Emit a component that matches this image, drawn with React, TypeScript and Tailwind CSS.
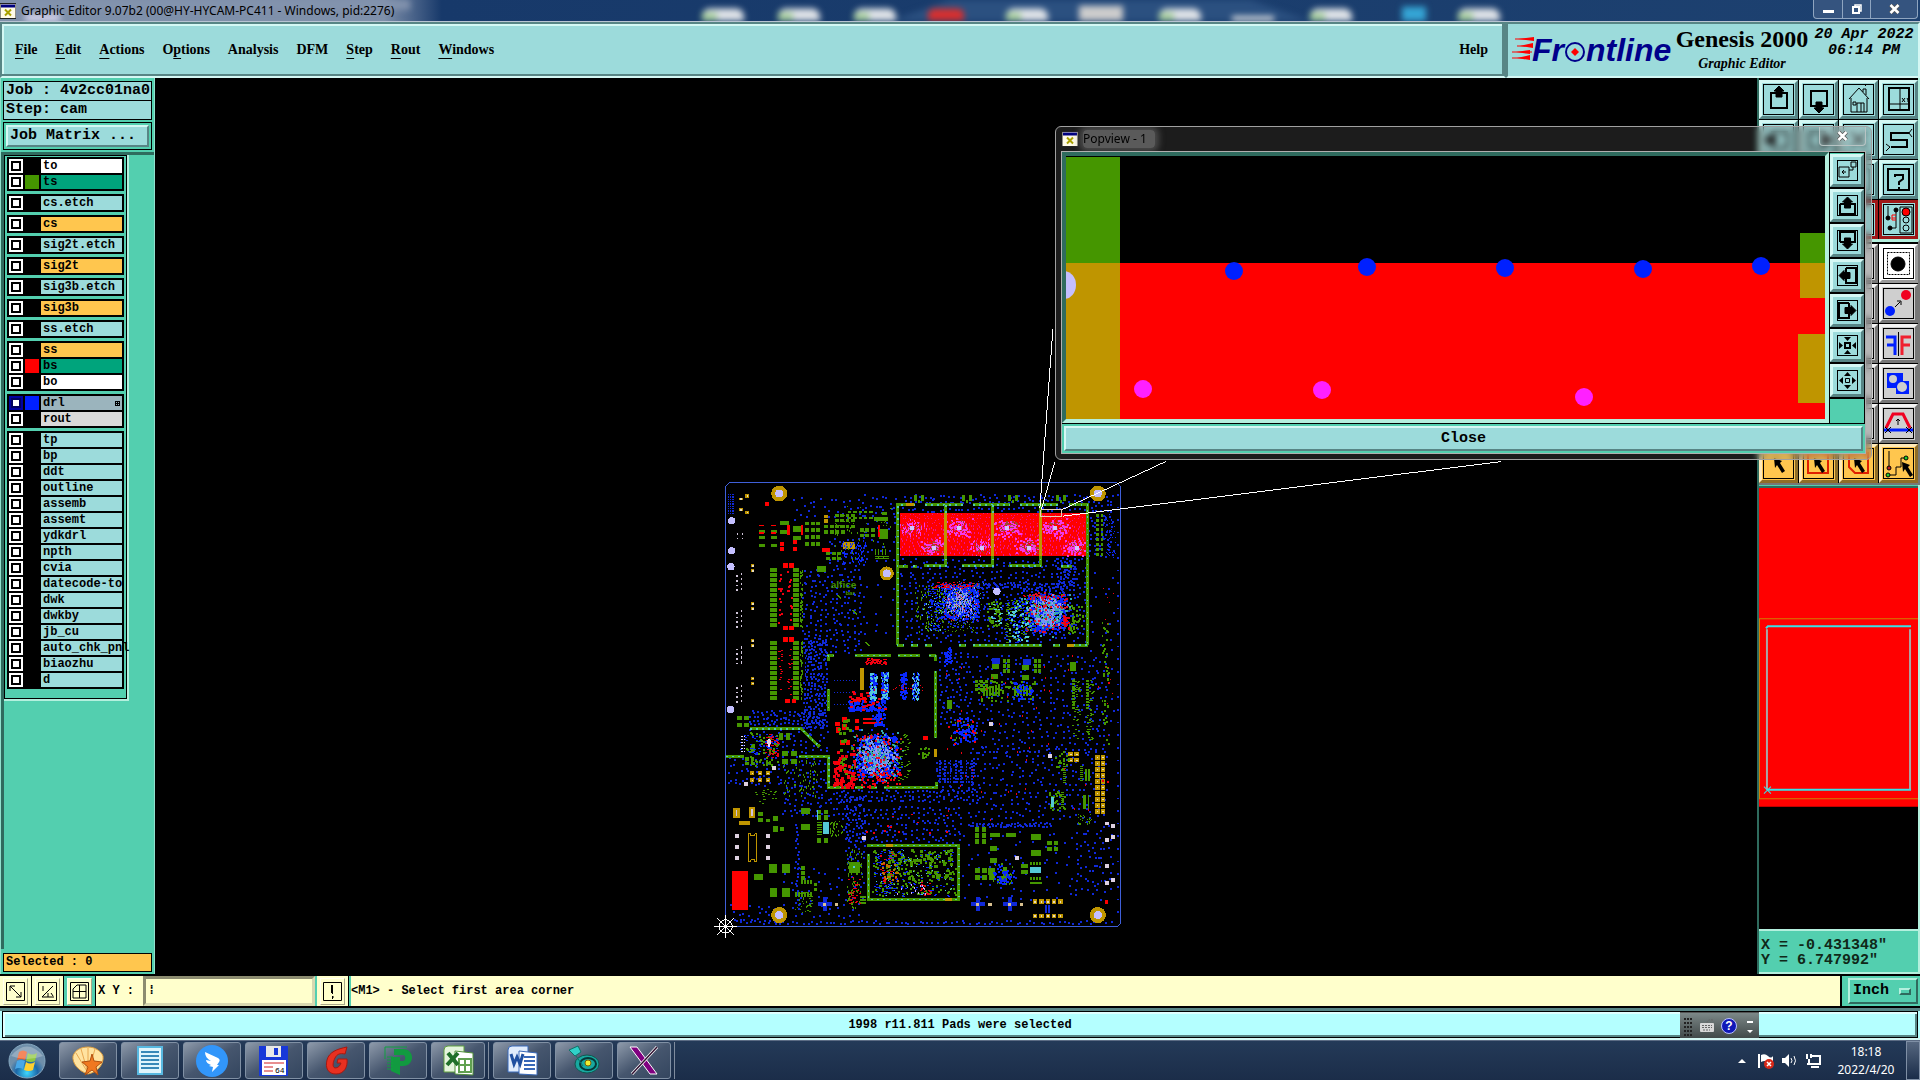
import type { ReactNode } from 'react'

type Box = [number, number, number, number]
type Dot = [number, number]

const MONO = "font-['Liberation_Mono',monospace] font-bold"
const SERIF = "font-['Liberation_Serif',serif] font-bold"
const SANS = "font-['Noto_Sans',sans-serif]"

const AQUA_RAISED = 'border-t-[#d4f8f4] border-l-[#d4f8f4] border-r-[#578585] border-b-[#578585] bg-[#9cdbdb]'

type Layer = { name: string; bg?: string; swatch?: string; active?: boolean }

const AQUA = 'bg-[#9cdbdb]'
const AMBER = 'bg-[#ffc64e]'

const layerGroups: Layer[][] = [
  [{ name: 'to', bg: 'bg-white' }, { name: 'ts', bg: 'bg-[#00a47c]', swatch: 'bg-[#459600]' }],
  [{ name: 'cs.etch' }],
  [{ name: 'cs', bg: AMBER }],
  [{ name: 'sig2t.etch' }],
  [{ name: 'sig2t', bg: AMBER }],
  [{ name: 'sig3b.etch' }],
  [{ name: 'sig3b', bg: AMBER }],
  [{ name: 'ss.etch' }],
  [{ name: 'ss', bg: AMBER }, { name: 'bs', bg: 'bg-[#00a47c]', swatch: 'bg-[#ff0000]' }, { name: 'bo', bg: 'bg-white' }],
  [{ name: 'drl', bg: 'bg-[#9bb4bd]', swatch: 'bg-[#0020ff]', active: true }, { name: 'rout', bg: 'bg-[#d9d9d9]' }],
  ['tp', 'bp', 'ddt', 'outline', 'assemb', 'assemt', 'ydkdrl', 'npth', 'cvia', 'datecode-to', 'dwk', 'dwkby', 'jb_cu', 'auto_chk_pnl', 'biaozhu', 'd'].map((name) => ({ name })),
]

// [text before, underlined letter, text after]
const menus: [string, string, string][] = [
  ['', 'F', 'ile'],
  ['', 'E', 'dit'],
  ['', 'A', 'ctions'],
  ['O', 'p', 'tions'],
  ['Analysis', '', ''],
  ['DFM', '', ''],
  ['', 'S', 'tep'],
  ['', 'R', 'out'],
  ['', 'W', 'indows'],
]

const XWindowIcon = () => (
  <svg viewBox="0 0 16 15" className="h-4 w-4 shrink-0" aria-hidden="true">
    <rect width="16" height="15" fill="#fffbe8" stroke="#222" />
    <rect x="1" y="1" width="14" height="3" fill="#000080" />
    <path d="M5 6l6 6M11 6l-6 6" stroke="#a8a000" strokeWidth="2" />
  </svg>
)

function TitleBar() {
  return (
    <header className="relative flex h-[22px] shrink-0 items-center overflow-hidden border-b border-[#b9c4d2] bg-linear-to-r from-[#7f90aa] from-20% via-[#17396a] via-23% to-[#1d4170]">
      <svg className="absolute inset-0 h-full w-full blur-[3px]" viewBox="0 0 1920 22" preserveAspectRatio="none" aria-hidden="true">
        <path d="M950 0h300l60 22h-420z" fill="#2b5080" />
        {[722, 798, 874, 1026, 1179, 1330, 1478].map((x) => (
          <g key={x}>
            <rect x={x - 20} y="9" width="42" height="20" rx="8" fill="#dfe3e8" />
            <rect x={x - 20} y="13" width="15" height="12" fill="#a9cfa0" />
          </g>
        ))}
        <rect x="928" y="9" width="36" height="16" rx="6" fill="#d63030" />
        <rect x="1079" y="6" width="44" height="20" fill="#cccccc" />
        <rect x="1232" y="17" width="42" height="8" fill="#e8e8e8" />
        <rect x="1402" y="7" width="24" height="18" fill="#35a5d5" />
        <rect x="0" y="0" width="410" height="10" fill="#8393ae" />
        <rect x="25" y="15" width="35" height="8" fill="#e0dcf4" />
      </svg>
      <div className="relative flex items-center gap-[5px]">
        <XWindowIcon />
        <h1 className={`${SANS} text-[12px] leading-5 text-black`}>Graphic Editor 9.07b2 (00@HY-HYCAM-PC411 - Windows, pid:2276)</h1>
      </div>
      <div className="relative mr-[2px] ml-auto flex h-[19px] self-start rounded-b border border-t-0 border-[#8fa5c0] bg-[#35547f]">
        <button aria-label="Minimize" className="flex w-[29px] items-center justify-center border-r border-[#8fa5c0]">
          <span className="mt-1 h-[3px] w-[11px] bg-white" />
        </button>
        <button aria-label="Restore" className="flex w-[28px] items-center justify-center border-r border-[#8fa5c0]">
          <svg viewBox="0 0 10 10" className="h-[10px] w-[10px]" fill="none" stroke="#fff">
            <path d="M3 2V1h6v6H8" strokeWidth="1.5" />
            <path d="M1 3h6v6H1z" strokeWidth="2" />
          </svg>
        </button>
        <button aria-label="Close" className="flex w-[46px] items-center justify-center">
          <CloseGlyph />
        </button>
      </div>
    </header>
  )
}

const CloseGlyph = () => (
  <svg viewBox="0 0 11 10" className="h-[10px] w-[11px]">
    <path d="M1.500 1l8 8M9.500 1l-8 8" stroke="#555" strokeWidth="4" />
    <path d="M1.500 1l8 8M9.500 1l-8 8" stroke="#fff" strokeWidth="2.500" />
  </svg>
)

function FrontlineLogo() {
  return (
    <svg viewBox="0 0 162 40" className="h-10 w-[162px] overflow-visible" role="img" aria-label="Frontline">
      <g fill="#f00" stroke="#f00">
        <path d="M3 8h18M5 15h15M0 21h20M0 27h18" strokeWidth="1" />
        <path d="M6 8l16-2v4zM8 15l13-3v5zM4 21l14-2v4zM5 27l13-3v5z" stroke="none" />
      </g>
      <g fill="#00008b" fontFamily="Liberation Sans" fontWeight="bold" fontStyle="italic" fontSize="32">
        <text x="20" y="30">Fr</text>
        <text x="74" y="30">ntline</text>
      </g>
      <circle cx="63" cy="21" r="9" fill="#9cdbdb" stroke="#00008b" strokeWidth="2" />
      <path d="M63 17l4 4-4 4-4-4z" fill="#f00" />
    </svg>
  )
}

function HeaderBar() {
  return (
    <div className="flex h-14 shrink-0 bg-[#9cdbdb]">
      <nav className="flex flex-1 items-center border-2 border-t-[#578585] border-r-[#578585] border-b-[#d4f8f4] border-l-[#578585] pr-4 pl-[13px] shadow-[inset_-2px_-2px_#578585,inset_2px_2px_#d4f8f4]">
        <ul className={`${SERIF} flex flex-1 gap-[18px] text-[14px] leading-5`}>
          {menus.map(([before, key, after]) => (
            <li key={before + key + after}>
              <button>
                {before}
                <span className="underline underline-offset-4">{key}</span>
                {after}
              </button>
            </li>
          ))}
        </ul>
        <button className={`${SERIF} text-[14px] leading-5`}>Help</button>
      </nav>
      <div className="flex w-[414px] items-start border-2 border-t-[#578585] border-r-[#d4f8f4] border-b-[#d4f8f4] border-l-[#578585] pt-[2px] pl-1">
        <div className="pt-[5px]">
          <FrontlineLogo />
        </div>
        <div className={`${SERIF} w-[136px] text-center`}>
          <p className="text-[24px] leading-[26px] whitespace-nowrap">Genesis 2000</p>
          <p className="text-[14px] leading-6 italic">Graphic Editor</p>
        </div>
        <div className={`${MONO} flex-1 pt-px text-center text-[15px] leading-4 italic`}>
          <p className="whitespace-nowrap">20 Apr 2022</p>
          <p>06:14 PM</p>
        </div>
      </div>
    </div>
  )
}

function LayerRow({ name, bg = AQUA, swatch = 'bg-black', active }: Layer) {
  return (
    <li className="flex h-4 items-center gap-[2px]">
      <label className="flex h-4 items-center gap-[2px]">
        <input
          type="checkbox"
          defaultChecked={active}
          className="h-[14px] w-[14px] shrink-0 appearance-none border-2 border-white bg-white shadow-[inset_0_0_0_2px_#000] checked:border-[#0000a0] checked:shadow-[inset_0_0_0_2px_#000060]"
        />
        <span className={`h-[14px] w-[14px] shrink-0 ${swatch}`} />
        <span className={`${MONO} ${bg} h-[14px] w-[81px] pl-[2px] text-[12px] leading-[14px] whitespace-nowrap`}>{name}</span>
      </label>
      {active && (
        <svg viewBox="0 0 5 5" className="-ml-[9px] h-[5px] w-[5px]" aria-hidden="true" shapeRendering="crispEdges">
          <path d="M.5 .5h4v4h-4zM.5 2.500h4M2.500 .5v4" fill="none" stroke="#000" />
        </svg>
      )}
    </li>
  )
}

function LayerPanel() {
  return (
    <aside className="flex w-[155px] shrink-0 flex-col border-x border-[#8fe0cc] bg-[#53cfaf]">
      <div className={`${MONO} flex flex-col px-[2px] pt-[3px] text-[15px]`}>
        <p className="h-[20px] border border-black bg-[#9cdbdb] pl-[2px] leading-[18px] whitespace-nowrap">Job : 4v2cc01na0</p>
        <p className="-mt-px h-[20px] border border-black bg-[#9cdbdb] pl-[2px] leading-[18px]">Step: cam</p>
        <div className="mt-[2px] border border-black p-[2px]">
          <button className={`${AQUA_RAISED} block h-[22px] w-full border-2 pl-[2px] text-left leading-[18px]`}>Job Matrix ...</button>
        </div>
      </div>
      <div className="mt-[2px] flex flex-1 items-start border-t-3 border-l-3 border-[#2f6b5e]">
        <div className="w-[125px] border-r-2 border-b-2 border-[#b4f0de]">
          <ul className="flex flex-col gap-[3px] border border-black px-[2px] pt-px pb-[9px]">
            {layerGroups.map((group) => (
              <li key={group[0].name} className="bg-black p-px pl-[2px]">
                <ul>
                  {group.map((layer) => (
                    <LayerRow key={layer.name} {...layer} />
                  ))}
                </ul>
              </li>
            ))}
          </ul>
        </div>
      </div>
      <p className={`${MONO} m-[2px] mt-1 h-[19px] border border-black bg-[#ffc64e] pl-[2px] text-[12px] leading-[17px]`}>Selected : 0</p>
    </aside>
  )
}

/* ---------- board artwork ---------- */

const boxPath = (boxes: Box[]) => boxes.map(([x, y, w, h]) => `M${x} ${y}h${w}v${h}h${-w}z`).join('')

const random = (seed: number) => () => {
  seed = (seed * 1664525 + 1013904223) % 4294967296
  return seed / 4294967296
}

// Pads sprinkled over a zone, snapped to the 3-unit raster
const scatter = (seed: number, [x, y, w, h]: Box, count: number, size = 6, tall = size) => {
  const next = random(seed)
  return boxPath(
    Array.from({ length: count }, (): Box => [x + Math.round((next() * w) / 3) * 3, y + Math.round((next() * h) / 3) * 3, size, tall]),
  )
}

// Evenly spread vias: one per cell, with some jitter
const spread = (seed: number, [x, y, w, h]: Box, count: number, size = 6) => {
  const next = random(seed)
  const cell = Math.sqrt((w * h) / count)
  const cols = Math.max(1, Math.round(w / cell))
  const rows = Math.max(1, Math.round(h / cell))
  const snap = (v: number) => Math.round(v / 3) * 3
  return boxPath(
    Array.from({ length: cols * rows }, (_, i): Box => [
      x + snap(((i % cols) + next() * 0.8) * (w / cols)),
      y + snap((Math.floor(i / cols) + next() * 0.8) * (h / rows)),
      size,
      size,
    ]),
  )
}

// Same, but denser towards the centre
const cluster = (seed: number, [x, y, w, h]: Box, count: number, size = 3, tall = size) => {
  const next = random(seed)
  const pick = () => (next() + next()) / 2
  return boxPath(
    Array.from({ length: count }, (): Box => [x + Math.round((pick() * w) / 3) * 3, y + Math.round((pick() * h) / 3) * 3, size, tall]),
  )
}

const grid = (x: number, y: number, cols: number, rows: number, dx: number, dy: number, w: number, h: number): Box[] =>
  Array.from({ length: cols * rows }, (_, i): Box => [x + (i % cols) * dx, y + Math.floor(i / cols) * dy, w, h])

const viaZones: [Box, number][] = [
  [[230, 80, 310, 70], 50],
  [[440, 70, 105, 210], 40],
  [[340, 200, 110, 90], 35],
  [[260, 290, 180, 260], 170],
  [[262, 500, 75, 270], 200],
  [[440, 340, 100, 170], 14],
  [[555, 262, 560, 85], 140],
  [[560, 340, 555, 175], 300],
  [[560, 70, 640, 28], 80],
  [[780, 335, 260, 20], 60],
  [[1020, 260, 60, 100], 60],
  [[555, 108, 560, 14], 40],
  [[1120, 100, 80, 160], 60],
  [[670, 535, 90, 230], 80],
  [[760, 550, 420, 300], 300],
  [[760, 830, 420, 220], 240],
  [[100, 720, 230, 60], 100],
  [[120, 780, 220, 170], 110],
  [[200, 940, 190, 100], 80],
  [[370, 955, 420, 40], 90],
  [[380, 1005, 360, 115], 170],
  [[390, 970, 60, 220], 70],
  [[760, 1055, 250, 14], 45],
  [[740, 1080, 440, 220], 90],
  [[240, 1060, 12, 260], 34],
  [[40, 1300, 150, 60], 26],
  [[60, 1350, 1130, 12], 70],
  [[200, 1190, 250, 160], 60],
  [[660, 870, 120, 100], 60],
  [[1080, 1050, 120, 220], 40],
  [[1125, 300, 80, 500], 36],
  [[35, 860, 100, 90], 30],
]

const greenPads: Box[] = [
  ...grid(165, 292, 1, 12, 0, 15, 21, 13),
  ...grid(234, 292, 1, 12, 0, 15, 18, 13),
  ...grid(165, 511, 1, 12, 0, 15, 21, 13),
  ...grid(234, 511, 1, 12, 0, 15, 18, 13),
  ...grid(130, 180, 2, 2, 36, 18, 18, 8),
  ...grid(130, 222, 2, 1, 36, 0, 18, 7),
  [195, 150, 27, 15], [195, 180, 27, 12], [234, 168, 24, 16], [234, 197, 24, 12], [306, 288, 27, 17],
  ...grid(270, 153, 3, 4, 17, 21, 12, 11),
  ...grid(327, 162, 4, 2, 17, 18, 12, 12),
  ...grid(360, 129, 4, 3, 16, 17, 11, 9),
  ...grid(399, 120, 5, 2, 16, 18, 10, 8),
  ...grid(435, 174, 3, 2, 16, 17, 12, 10),
  ...grid(333, 246, 3, 2, 17, 14, 12, 9),
  [477, 140, 42, 12], [492, 177, 27, 14], [492, 192, 27, 14], [500, 125, 15, 9],
  [480, 237, 3, 18], [490, 237, 3, 18], [500, 237, 3, 18], [510, 237, 3, 18], [480, 258, 42, 3], [480, 264, 42, 3],
  ...[597, 741, 879, 1023].flatMap((x): Box[] => [[x, 72, 9, 18], [x + 21, 72, 9, 18], [x + 12, 87, 6, 9]]),
  ...grid(1144, 129, 2, 9, 13, 15, 9, 9),
  [831, 581, 20, 15], [828, 612, 21, 15], [921, 585, 21, 15], [921, 615, 21, 15], [1065, 576, 18, 26], [696, 690, 15, 27],
  ...grid(864, 567, 2, 3, 12, 15, 9, 12),
  ...grid(957, 567, 2, 3, 12, 15, 9, 12),
  ...grid(780, 630, 3, 3, 15, 12, 9, 7),
  ...grid(804, 648, 6, 1, 9, 0, 5, 28),
  ...grid(897, 648, 6, 1, 9, 0, 5, 28),
  ...grid(1072, 630, 1, 10, 0, 9, 9, 5),
  ...grid(1114, 630, 1, 10, 0, 9, 9, 5),
  ...grid(66, 738, 2, 2, 21, 21, 14, 12),
  ...grid(90, 861, 2, 2, 16, 14, 11, 10),
  ...grid(201, 843, 2, 2, 27, 24, 18, 13),
  [192, 789, 12, 20], [213, 789, 12, 20], [108, 822, 12, 24],
  [258, 1014, 27, 18], [258, 1062, 27, 18], [129, 1026, 15, 12], [129, 1044, 15, 12], [153, 1047, 12, 10], [174, 1038, 15, 14], [174, 1068, 15, 18], [195, 1071, 12, 12],
  ...grid(306, 1018, 2, 2, 20, 17, 12, 14),
  ...grid(306, 1104, 2, 1, 20, 0, 12, 14),
  ...grid(306, 1056, 1, 6, 0, 7, 14, 4),
  [162, 1182, 24, 27], [201, 1182, 24, 27], [165, 1254, 21, 27], [201, 1254, 24, 27], [117, 1212, 27, 18],
  ...grid(258, 1188, 1, 3, 0, 15, 12, 11),
  ...grid(258, 1230, 4, 1, 9, 0, 6, 11),
  ...grid(240, 1267, 6, 1, 9, 0, 6, 14),
  ...grid(297, 1239, 1, 2, 0, 14, 9, 9),
  [402, 1176, 33, 33], [399, 1266, 18, 6], [435, 1277, 18, 6], [435, 1287, 18, 6], [435, 1297, 18, 6], [399, 1287, 12, 6],
  ...grid(780, 1071, 2, 3, 21, 18, 12, 14),
  [825, 1089, 30, 12], [873, 1089, 30, 12], [948, 1092, 30, 18], [948, 1140, 30, 18], [825, 1128, 21, 15], [825, 1164, 21, 15],
  ...grid(780, 1194, 3, 2, 21, 21, 14, 14),
  [819, 1194, 21, 21], [864, 1191, 12, 45], [918, 1182, 21, 12], [918, 1200, 21, 12], [945, 1236, 36, 6],
  ...grid(945, 1175, 4, 1, 9, 0, 6, 9),
  ...grid(945, 1222, 4, 1, 9, 0, 6, 9),
  ...grid(996, 1113, 2, 2, 20, 17, 14, 13),
  ...grid(1096, 887, 1, 8, 0, 6, 9, 3),
  ...grid(1045, 887, 1, 9, 0, 6, 9, 3),
  ...grid(1038, 966, 1, 8, 0, 6, 9, 3),
  [1110, 897, 5, 36], [1119, 897, 5, 36], [1104, 975, 9, 42], [1118, 975, 5, 42],
]

const redPads: Box[] = [
  [51, 1203, 48, 117],
  ...grid(204, 279, 2, 1, 18, 0, 14, 14),
  ...grid(204, 468, 2, 1, 18, 0, 14, 12),
  ...grid(204, 501, 2, 1, 18, 0, 14, 14),
  ...grid(210, 685, 2, 1, 20, 0, 13, 13),
  ...grid(130, 162, 2, 2, 36, 24, 16, 6),
  [195, 216, 12, 10], [195, 231, 12, 12], [232, 210, 14, 12], [232, 231, 14, 12], [216, 162, 8, 32], [256, 162, 8, 32],
  [321, 234, 12, 10], [334, 234, 12, 10], [489, 165, 6, 36], [150, 94, 11, 11],
  [423, 681, 13, 13], [441, 681, 13, 13], [381, 741, 15, 15], [381, 762, 15, 18], [360, 756, 14, 12], [363, 771, 11, 18],
  [375, 810, 15, 15], [393, 810, 12, 14], [420, 747, 12, 12], [420, 768, 12, 12], [360, 873, 14, 12], [363, 936, 9, 12], [375, 936, 9, 12], [408, 906, 12, 9],
  [445, 744, 60, 5], [445, 756, 60, 5], [625, 798, 14, 12], [1170, 1290, 9, 12],
]

const goldPads: Box[] = [
  [327, 132, 12, 10], [327, 146, 12, 10], [384, 215, 36, 20], [434, 594, 12, 66], [657, 837, 9, 24],
  [54, 1012, 20, 30], [100, 1010, 20, 34], [72, 1053, 32, 12],
  ...grid(1140, 855, 2, 10, 18, 18, 14, 13),
  ...grid(1060, 846, 2, 2, 18, 18, 14, 12),
  ...grid(105, 903, 3, 2, 23, 21, 12, 12),
  ...grid(954, 1288, 5, 1, 19, 0, 13, 14),
  ...grid(954, 1332, 5, 1, 19, 0, 13, 12),
  ...grid(108, 281, 1, 2, 0, 15, 9, 9),
  ...grid(108, 395, 1, 2, 0, 15, 9, 9),
  ...grid(108, 506, 1, 2, 0, 15, 9, 9),
  ...grid(108, 620, 1, 2, 0, 15, 9, 9),
  [90, 70, 12, 12], [72, 81, 10, 8], [90, 120, 12, 11], [72, 113, 10, 8],
]

const holes: Dot[] = [[192, 69], [1149, 69], [515, 309], [192, 1335], [1149, 1335]]
const tooling: Dot[] = [[49, 151], [49, 241], [47, 289], [46, 718], [846, 363]]
const whitePins: Dot[] = [
  [64, 1099], [64, 1132], [64, 1165], [158, 1099], [158, 1132], [158, 1165], [175, 894], [447, 1103], [905, 1164], [1005, 858],
  [828, 762], [1176, 1060], [1194, 1069], [1176, 1110], [1194, 1102], [1176, 1189], [1194, 1230], [1176, 1238], [93, 942], [162, 816],
]

const shieldFrames = [
  'M548 525V103h51M630 103h114M774 103h111M915 103h114M1061 103h57v422',
  'M692 103v183h-66M545 287h33M594 287h13M834 103v183h-93M977 103v183h-95M1038 287h33',
  'M545 524h21M588 524h20M630 524h20M732 524h20M774 524h206M1014 524h21M1056 524h62',
  'M336 555h20M340 555v18M420 555h108M549 555h66M642 555h22M661 555v18M661 603v200M340 655v66',
  'M105 776h154l54 53M33 859h54M252 859h89v93h58M420 952h24M462 952h24M507 952h158v-16',
  'M460 1152v136h272v-162H457',
]

function BoardArt() {
  return (
    <svg viewBox="0 0 1602 897" className="h-full w-full" role="img" aria-label="Board layout">
      <g transform="translate(560 393) scale(0.33333)" shapeRendering="crispEdges">
        <path d="M41 37H1207L1217 47V1359L1209 1369H31V47z" fill="none" stroke="#3f5fd8" strokeWidth="3" />
        <g fill="#1029d8">
          {viaZones.map(([zone, count], i) => (
            <path key={i} d={spread(i * 97 + 11, zone, count)} />
          ))}
          <path d={boxPath(grid(356, 628, 8, 3, 9, 36, 5, 5))} />
          <path d={boxPath(grid(672, 870, 7, 8, 16, 9, 5, 5))} />
          <path d={boxPath(grid(37, 70, 3, 9, 7, 7, 4, 4))} />
          <path d={boxPath(grid(1207, 70, 1, 34, 0, 38, 5, 5))} />
          <path d="M324 1281h12v42h-12zM309 1296h42v12h-42zM783 1281h12v42h-12zM768 1296h42v12h-42zM879 1281h12v42h-12zM864 1296h42v12h-42zM831 564h24v18h-24zM924 567h24v18h-24zM989 1305h6v24h-6zM1000 1305h6v24h-6z" />
        </g>
        <path d={boxPath(greenPads)} fill="#459600" />
        <path d={boxPath(redPads)} fill="#f00" />
        <path d={boxPath(goldPads)} fill="#bf9500" />
        <path d={boxPath(goldPads.slice(8).map(([x, y, w, h]): Box => [x + w / 2 - 2, y + h / 2 - 2, 5, 5]))} fill="#e8dcc0" />
        <path d={boxPath([[324, 1298, 10, 10], [360, 1298, 8, 10], [783, 1298, 10, 10], [820, 1298, 10, 10], [879, 1298, 10, 10], [915, 1298, 8, 10]])} fill="#d8c090" />
        <path d="M62 1018h4v18h-4zM107 1016h5v22h-5z" fill="#d0c4e0" />

        {/* power amplifier strip */}
        <path d="M555 126h558v132H555z" fill="#f00" />
        <path d={spread(5, [555, 126, 555, 128], 560, 4)} fill="#f0108c" />
        {[[590, 172], [732, 172], [877, 172], [1020, 172], [658, 232], [800, 232], [943, 232], [1086, 232]].map(([x, y], i) => (
          <g key={x}>
            <path d={cluster(i + 70, [x - 48, y - 32, i === 7 ? 74 : 92, i > 3 ? 56 : 64], 70, 5)} fill="#f538e8" />
            <path d={cluster(i + 170, [x - 36, y - 26, i === 7 ? 62 : 72, 50], 34, 4)} fill="#a04a30" />
            <path d={`M${x - 6} ${y - 6}h12v14h-12z`} fill="#d0c4ff" />
          </g>
        ))}

        <g fill="none">
          {shieldFrames.map((d) => (
            <g key={d}>
              <path d={d} stroke="#459600" strokeWidth="9" />
              <path d={d} stroke="#50c8b4" strokeWidth="5" strokeDasharray="5 13" />
            </g>
          ))}
          <path d="M692 126v132M834 126v132M977 126v132M574 103h22M1056 524h22M514 1126h20M690 1288h22" stroke="#bf9500" strokeWidth="9" />
        </g>

        {/* dense BGA regions */}
        {([[[680, 340, 108, 105], 1], [[940, 372, 108, 105], 2], [[424, 795, 124, 125], 3]] as [Box, number][]).map(([zone, n]) => {
          const [x, y, w, h] = zone
          const halo: Box = [x - 30, y - 24, w + 56, h + 50]
          return (
            <g key={n}>
              <path d={cluster(n * 61, halo, 200, 5)} fill="#0a28ff" />
              <path d={scatter(n * 31, zone, 330, 6)} fill="#0a28ff" />
              <path d={cluster(n * 37, zone, 190, 4)} fill="#7098f0" />
              <path d={cluster(n * 41, zone, 90, 3, 6)} fill="#b090e0" />
              <path d={cluster(n * 43, halo, 80, 4)} fill="#35a8b0" />
              <path d={scatter(n * 47, [x - 9, y - 6, w + 18, h + 12], 75, 4)} fill="#e01028" />
              <path d={scatter(n * 53, [x - 15, y - 6, w + 24, h + 12], 60, 3)} fill="#459600" />
            </g>
          )
        })}
        <g fill="#459600">
          <path d={scatter(201, [600, 340, 85, 140], 80, 4, 6)} />
          <path d={scatter(202, [870, 385, 70, 130], 100, 6, 4)} />
          <path d={scatter(203, [812, 390, 42, 75], 45, 6)} />
          <path d={scatter(204, [1060, 400, 45, 85], 40, 6)} />
          <path d={scatter(205, [690, 440, 100, 45], 30, 4)} />
          <path d={scatter(206, [350, 105, 180, 160], 60, 5)} />
          <path d={scatter(207, [780, 630, 180, 60], 60, 5)} />
          <path d={scatter(208, [1070, 625, 22, 180], 45, 6, 4)} />
          <path d={scatter(228, [1114, 625, 20, 180], 45, 6, 4)} />
          <path d={scatter(209, [90, 785, 100, 100], 60, 5)} />
          <path d={scatter(210, [200, 870, 110, 110], 60, 4)} />
          <path d={scatter(211, [120, 940, 70, 60], 20, 5)} />
          <path d={scatter(212, [470, 1136, 250, 140], 150, 6)} />
          <path d={scatter(213, [520, 1136, 190, 50], 50, 9)} />
          <path d={scatter(229, [520, 1200, 190, 26], 24, 9)} />
          <path d={scatter(214, [395, 1135, 45, 180], 60, 5)} />
          <path d={scatter(215, [830, 1180, 60, 60], 50, 4)} />
          <path d={scatter(216, [235, 1265, 60, 60], 40, 4)} />
          <path d={scatter(217, [255, 290, 6, 180], 50, 3, 5)} />
          <path d={scatter(218, [255, 510, 6, 180], 50, 3, 5)} />
          <path d={scatter(219, [550, 790, 35, 140], 40, 4)} />
          <path d={scatter(220, [1160, 450, 22, 380], 40, 5)} />
          <path d={scatter(221, [1000, 960, 50, 60], 30, 4)} />
          <path d={scatter(222, [1085, 1030, 45, 30], 26, 4)} />
          <path d={scatter(223, [1020, 840, 40, 60], 20, 5)} />
          <path d={scatter(224, [345, 1045, 38, 50], 34, 4)} />
          <path d={scatter(225, [370, 740, 40, 180], 24, 8)} />
          <path d={scatter(226, [610, 830, 35, 30], 16, 5)} />
          <path d={scatter(227, [705, 750, 80, 60], 26, 4)} />
          <path d="M450 515l12 12M412 418l14 14M366 374l12 10" stroke="#459600" strokeWidth="4" />
        </g>
        <g fill="#0a28ff">
          <path d={scatter(301, [400, 690, 110, 30], 120)} />
          <path d={scatter(302, [470, 715, 35, 50], 50)} />
          <path d={scatter(303, [463, 606, 20, 80], 60, 5)} />
          <path d={scatter(304, [498, 606, 20, 80], 90, 5)} />
          <path d={scatter(305, [556, 606, 18, 80], 60, 5)} />
          <path d={scatter(306, [590, 606, 20, 80], 90, 5)} />
          <path d={scatter(307, [380, 210, 70, 70], 60, 4)} />
          <path d={scatter(308, [475, 1136, 100, 140], 110, 5)} />
          <path d={scatter(317, [580, 1136, 135, 140], 50, 5)} />
          <path d={scatter(309, [835, 1180, 60, 60], 50, 4)} />
          <path d={scatter(310, [640, 340, 50, 140], 80, 5)} />
          <path d={scatter(311, [870, 385, 70, 130], 80, 5)} />
          <path d={scatter(312, [895, 630, 60, 60], 40, 5)} />
          <path d={scatter(313, [685, 530, 24, 60], 30)} />
          <path d={cluster(314, [700, 735, 90, 90], 80, 5)} />
          <path d={scatter(315, [75, 790, 110, 60], 50, 5)} />
          <path d={scatter(316, [1170, 130, 30, 130], 40, 4)} />
        </g>
        <g fill="#f00010">
          <path d={scatter(401, [448, 562, 65, 18], 60, 4)} />
          <path d={scatter(402, [355, 840, 60, 110], 50, 7)} />
          <path d={scatter(403, [400, 655, 110, 60], 34, 7)} />
          <path d={scatter(404, [400, 900, 160, 50], 60, 5)} />
          <path d={scatter(405, [150, 790, 40, 70], 45, 4)} />
          <path d={scatter(406, [655, 335, 120, 18], 50, 4, 3)} />
          <path d={scatter(407, [920, 370, 120, 14], 40, 4)} />
          <path d={scatter(408, [1045, 435, 16, 40], 22, 4)} />
          <path d={scatter(409, [189, 300, 12, 160], 14, 5)} />
          <path d={scatter(419, [216, 300, 12, 160], 14, 5)} />
          <path d={scatter(410, [189, 520, 12, 160], 14, 5)} />
          <path d={scatter(420, [216, 520, 12, 160], 14, 5)} />
          <path d={scatter(411, [490, 1145, 60, 100], 30, 5)} />
          <path d={scatter(412, [615, 1235, 30, 40], 22, 5)} />
          <path d={scatter(413, [400, 1220, 35, 80], 34, 4)} />
          <path d={scatter(414, [680, 530, 500, 520], 45, 5)} />
          <path d={scatter(415, [450, 1030, 250, 60], 12, 5)} />
          <path d={scatter(416, [530, 640, 90, 20], 24, 4)} />
          <path d={scatter(417, [700, 740, 80, 90], 14, 5)} />
          <path d={scatter(418, [1165, 280, 30, 520], 12, 4)} />
        </g>
        <g fill="#55c8d8">
          <path d={scatter(501, [463, 606, 20, 80], 40, 4)} />
          <path d={scatter(502, [498, 606, 20, 80], 50, 4)} />
          <path d={scatter(503, [590, 606, 20, 80], 50, 4)} />
          <path d={scatter(504, [620, 350, 60, 130], 30, 4)} />
          <path d={scatter(505, [880, 390, 60, 120], 40, 4)} />
          <path d={scatter(506, [480, 1136, 230, 140], 50, 4)} />
          <path d={scatter(507, [820, 400, 40, 60], 20, 4)} />
          <path d="M324 1055h18v36h-18zM306 1018h4v32h-4zM945 1191h33v18h-33zM1009 981h9v28h-9zM414 1189h6v6h-6z" />
        </g>
        <path d={scatter(601, [490, 1170, 60, 60], 20, 6)} fill="#bf7500" />
        <path d={scatter(602, [545, 1240, 90, 30], 12, 5)} fill="#d0b0ff" />
        <path d={boxPath([...grid(78, 796, 2, 6, 7, 9, 4, 5), [159, 806, 6, 24]])} fill="#e4dcff" />
        <path
          d={boxPath([315, 425, 535, 650].flatMap((y) => [...grid(62, y, 1, 4, 0, 14, 5, 5), ...grid(76, y - 7, 1, 4, 0, 15, 5, 7)]).concat(grid(64, 188, 2, 2, 15, 14, 5, 5)))}
          fill="#cfc4d8"
        />
        <path d="M99 1091h7v6h12v-6h7v84h-7v-6h-12v6h-7z" fill="none" stroke="#bf9500" strokeWidth="3" />
        <g fill="#459600" fontFamily="Liberation Sans" fontWeight="bold">
          <text x="347" y="353" fontSize="30">alfice</text>
          <text x="391" y="374" fontSize="18">bar</text>
        </g>

        {holes.map(([x, y]) => (
          <g key={`${x}-${y}`}>
            <circle cx={x} cy={y} r={x === 515 ? 21 : 24} fill="#bf9500" />
            <circle cx={x} cy={y} r="12" fill="#c4bfff" />
          </g>
        ))}
        {tooling.map(([x, y]) => (
          <circle key={`${x}-${y}`} cx={x} cy={y} r="11" fill="#c4bfff" />
        ))}
        {whitePins.map(([x, y]) => (
          <path key={`${x}-${y}`} d={`M${x - 6} ${y - 6}h12v12h-12z`} fill="#ddd0e0" />
        ))}

        {/* zoomed window with its guide lines */}
        <path d="M978 118h62v20h-62z" fill="none" stroke="#e8d0b8" strokeWidth="3" />
        <path d="M1014-426L975 112M1020-27L980 115M1353-27L1040 118M2361-27L1043 137" stroke="#fff" strokeWidth="3" />

        <g fill="none" stroke="#fff" strokeWidth="3">
          <circle cx="31" cy="1369" r="20" />
          <path d="M-3 1369h68M31 1335v68M5 1343l52 52M57 1343l-52 52" />
        </g>
      </g>
    </svg>
  )
}

/* ---------- tool buttons ---------- */

type Tone = 'aqua' | 'gray' | 'amber' | 'white' | 'alert'

const toneClass: Record<Tone, string> = {
  aqua: AQUA_RAISED,
  gray: 'border-t-[#f4f4f4] border-l-[#f4f4f4] border-r-[#777] border-b-[#777] bg-[#cfcfcf]',
  amber: 'border-t-[#ffe9b8] border-l-[#ffe9b8] border-r-[#8f6d28] border-b-[#8f6d28] bg-[#ffc64e]',
  white: 'border-t-[#fff] border-l-[#fff] border-r-[#999] border-b-[#999] bg-white',
  alert: 'border-[#a01818] bg-[#9cdbdb]',
}

function Tool({ label, tone = 'aqua', children }: { label: string; tone?: Tone; children?: ReactNode }) {
  return (
    <button aria-label={label} className={`${toneClass[tone]} flex h-[39px] w-full items-center justify-center border-3`}>
      <svg viewBox="0 0 31 31" className="h-[31px] w-[31px]" fill="none" stroke="#000">
        <rect x=".5" y=".5" width="30" height="30" />
        {children}
      </svg>
    </button>
  )
}

const PanUp = () => (
  <>
    <path d="M8 9h16v15H8z" strokeWidth="2" />
    <path d="M16 2l5 5h-2v6h-6V7h-2z" fill="#000" />
  </>
)

const Cursor = ({ x = 0, y = 0 }) => <path d={`M${x + 11} ${y + 10}l8 3-2 2 5 8-3 2-5-8-2 3z`} fill="#000" stroke="none" />

const LetterF = ({ flip }: { flip?: boolean }) => (
  <path d={flip ? 'M3 9h9v18M4 17h8' : 'M28 9h-9v18M27 17h-8'} stroke={flip ? '#0020ff' : '#f02030'} strokeWidth="3" />
)

function ToolColumn() {
  return (
    <aside className="flex w-[163px] shrink-0 flex-col border-r-2 border-l-2 border-r-[#b4f0de] border-l-[#2f6b5e] bg-[#53cfaf]">
      <div className="grid grid-cols-4 gap-px bg-black pt-[2px]">
        <Tool label="Pan up"><PanUp /></Tool>
        <Tool label="Pan down"><g transform="matrix(1 0 0 -1 0 31)"><PanUp /></g></Tool>
        <Tool label="Home">
          <path d="M6 15L16 4l10 11M8 14v14h16V14M20 8V5h3v6M14 28v-9h7v9M18 19v9M10 18h3v3h-3zM22 2l2-2" />
        </Tool>
        <Tool label="Cursor readout">
          <path d="M6 4h20v22H6z" strokeWidth="2" />
          <path d="M17 4v22M6 20h20M19 14l3 4M22 14l-3 4M24 14l1 2 2-2M25 16v2" strokeWidth="1" />
        </Tool>
        <Tool label="Pan left"><g transform="matrix(0 1 1 0 0 0)"><PanUp /></g></Tool>
        <Tool label="Pan right"><g transform="matrix(0 1 -1 0 31 0)"><PanUp /></g></Tool>
        <Tool label="Zoom"><path d="M8 8l15 15M23 8L8 23" strokeWidth="2" /></Tool>
        <Tool label="Snap">
          <path d="M26 9H8v7h16v7H8" strokeWidth="2" />
          <path d="M26 9l3-4M26 9l3 4M7 23l-4-3M7 23l-4 4" />
        </Tool>
        <Tool label="Zoom in"><path d="M8 8h15v15H8z" strokeWidth="2" /></Tool>
        <Tool label="Zoom out"><path d="M8 8h15v15H8z" /></Tool>
        <Tool label="Fit"><path d="M5 5h21v21H5z" /></Tool>
        <Tool label="Help">
          <path d="M5 5h21v21H5z" strokeWidth="2" />
          <path d="M12 13v-2h8v4l-4 3v3M16 23v2" strokeWidth="2" />
        </Tool>
        <Tool label="Netlist" tone="alert" />
        <Tool label="Layers" tone="alert" />
        <Tool label="Matrix" tone="alert" />
        <Tool label="Design rules" tone="alert">
          <path d="M5 2v12M13 6v18H7M17 3h12v26H17z" />
          <g fill="#000">
            <circle cx="5" cy="14" r="2" />
            <circle cx="13" cy="6" r="2" />
            <circle cx="7" cy="24" r="2" />
          </g>
          <circle cx="23" cy="8" r="4" fill="#f00" />
          <circle cx="23" cy="16" r="3" />
          <circle cx="23" cy="24" r="3" />
          <path d="M9 11v5M9 11h4M9 14h4M9 16h4" stroke="#f00" />
        </Tool>
      </div>
      <div className="-mr-[2px] grid grid-cols-4 gap-px border-t-3 border-r-2 border-b-2 border-t-[#b4f0de] border-r-[#777] border-b-[#777] bg-black pt-[2px]">
        {['Add pad', 'Add line', 'Add text'].map((label) => <Tool key={label} label={label} tone="gray" />)}
        <Tool label="Select pad" tone="white">
          <path d="M4.500 4.500h22v22h-22z" strokeDasharray="2 1" />
          <circle cx="15" cy="16" r="7" fill="#000" />
        </Tool>
        {['Add arc', 'Add surface', 'Copy'].map((label) => <Tool key={label} label={label} tone="gray" />)}
        <Tool label="Move" tone="gray">
          <circle cx="23" cy="7" r="5" fill="#f00020" stroke="none" />
          <circle cx="7" cy="23" r="5" fill="#0020ff" stroke="none" />
          <path d="M12 19l5-5M14 13h4v4" />
        </Tool>
        {['Rotate', 'Scale', 'Resize'].map((label) => <Tool key={label} label={label} tone="gray" />)}
        <Tool label="Mirror" tone="gray">
          <path d="M15.500 4v24" />
          <LetterF flip />
          <LetterF />
        </Tool>
        {['Break', 'Stretch', 'Cut'].map((label) => <Tool key={label} label={label} tone="gray" />)}
        <Tool label="Surface" tone="gray">
          <path d="M4 5h16v8h6v13H13v-6H4z" fill="#0020ff" stroke="none" />
          <g fill="#cfcfcf" stroke="none">
            <circle cx="10" cy="11" r="4" />
            <circle cx="19" cy="19" r="5" />
          </g>
        </Tool>
        {['Polarity', 'Attributes', 'Measure'].map((label) => <Tool key={label} label={label} tone="gray" />)}
        <Tool label="Contour" tone="gray">
          <path d="M3 20l7-14h10l7 14" stroke="#f00020" strokeWidth="3" />
          <path d="M1 22h29" stroke="#0020ff" strokeWidth="3" />
          <path d="M15 17v-6M13 13l2-2 2 2M2 19l6 6M8 19l-6 6M23 19l6 6M29 19l-6 6" />
        </Tool>
        <Tool label="Select single" tone="amber"><Cursor /></Tool>
        <Tool label="Select rectangle" tone="amber">
          <path d="M5 5h20v20H5z" stroke="#e02000" strokeWidth="2" />
          <Cursor />
        </Tool>
        <Tool label="Select polygon" tone="amber">
          <path d="M6 5h19v20H12l-6-6z" stroke="#e02000" strokeWidth="2" />
          <Cursor />
        </Tool>
        <Tool label="Select net" tone="amber">
          <path d="M6 3v17M6 27h7v-8h5v-9h5" />
          <g strokeWidth="1">
            <circle cx="6" cy="20" r="2" fill="#c02020" />
            <circle cx="5" cy="27" r="2" fill="#20d030" />
            <circle cx="23" cy="10" r="2" fill="#20d030" />
          </g>
          <Cursor x={8} y={4} />
        </Tool>
      </div>
      <div className="mt-px flex-1 border-t-2 border-[#2f6b5e] bg-black">
        <svg viewBox="0 0 160 440" preserveAspectRatio="none" className="h-full w-full" role="img" aria-label="Overview">
          <path d="M0 0h160v318H0z" fill="#f00" />
          <path d="M.5 130.500H160M.5 130v180H160" fill="none" stroke="#d08000" />
          <path d="M8 141v160M152 141v160" stroke="#a9a9a9" strokeWidth="2" />
          <path d="M7 140l2-2h144M8 301h145" fill="none" stroke="#38e0e8" strokeWidth="2" />
          <path d="M5 298l7 7M12 298l-7 7" stroke="#38e0e8" />
        </svg>
      </div>
      <div className={`${MONO} border-y-2 border-t-[#b4f0de] border-b-[#b4f0de] pt-[7px] pb-[4px] pl-[2px] text-[15px] leading-[15px] text-[#102818]`}>
        <p>X = -0.431348"</p>
        <p>Y =&nbsp;6.747992"</p>
      </div>
    </aside>
  )
}

/* ---------- popview window ---------- */

const PopPan = () => (
  <>
    <path d="M3 9v10h15V9H3" strokeWidth="2" />
    <path d="M10.500 2l5 5h-2v6h-6V7h-2z" fill="#000" />
  </>
)

const popTools: [string, ReactNode][] = [
  ['Duplicate view', <path key="p" d="M2 7h10v10H2zM14 2h5v5h-5zM12 10h4V7M5 12h4M5 12l2-2M5 12l2 2" />],
  ['Pan up', <PopPan key="p" />],
  ['Pan down', <g key="p" transform="matrix(1 0 0 -1 0 21)"><PopPan /></g>],
  ['Pan left', <g key="p" transform="matrix(0 1 1 0 0 0)"><PopPan /></g>],
  ['Pan right', <g key="p" transform="matrix(0 1 -1 0 21 0)"><PopPan /></g>],
  ['Zoom in', <g key="p"><path d="M8 8h5v5H8z" strokeWidth="2" /><path d="M7 2h7l-3.500 4zM7 19h7l-3.500-4zM2 7v7l4-3.500zM19 7v7l-4-3.500z" fill="#000" stroke="none" /></g>],
  ['Zoom out', <g key="p"><path d="M8.500 8.500h4v4h-4z" /><path d="M7 6h7l-3.500-4zM7 15h7l-3.500 4zM6 7v7l-4-3.500zM15 7v7l4-3.500z" fill="#000" stroke="none" /></g>],
]

const viaDots: Dot[] = [[168, 114], [301, 110], [439, 111], [577, 112], [695, 109]]
const padDots: Dot[] = [[77, 232], [256, 233], [518, 240]]

function Popview() {
  return (
    <section
      aria-label="Popview - 1"
      className="absolute top-[126px] right-[48px] flex h-[334px] w-[817px] flex-col overflow-hidden rounded-[6px] border border-[#a0a0a0] bg-[#70707040] px-[5px] pb-[5px] backdrop-blur-[3px]"
    >
      <div className="flex h-[26px] items-center gap-[5px] pl-px">
        <XWindowIcon />
        <h2 className={`${SANS} rounded bg-[#777777b0] pr-2 text-[12px] leading-[18px] text-black shadow-[0_0_6px_4px_#77777780]`}>Popview - 1</h2>
        <button aria-label="Close window" className="ml-auto flex h-[19px] w-[47px] items-center justify-center self-start rounded-b border border-t-0 border-[#b8c4c4] bg-[#ffffff20]">
          <CloseGlyph />
        </button>
      </div>
      <div className="flex flex-1 flex-col border border-[#b0b0b0] bg-[#53cfaf]">
        <div className="flex flex-1">
          <div className="flex-1 border-4 border-t-[#2f6b5e] border-r-[#b4f0de] border-b-[#b4f0de] border-l-[#2f6b5e] bg-black pt-px">
            <svg viewBox="0 0 759 262" preserveAspectRatio="none" className="h-full w-full" role="img" aria-label="Magnified view">
              <path d="M0 0h54v106H0zM734 76h25v30h-25z" fill="#459600" />
              <path d="M54 106h705v156H54z" fill="#f00" />
              <path d="M0 106h54v156H0zM734 106h25v35h-25zM732 177h27v69h-27z" fill="#bf9500" />
              <ellipse cx="-2" cy="128" rx="12" ry="14" fill="#c4bfff" />
              {viaDots.map(([x, y]) => <circle key={x} cx={x} cy={y} r="9" fill="#0020ff" />)}
              {padDots.map(([x, y]) => <circle key={x} cx={x} cy={y} r="9" fill="#ff20ff" />)}
            </svg>
          </div>
          <div className="flex w-[36px] flex-col border border-b-0 border-black pt-px">
            {popTools.map(([label, icon]) => (
              <div key={label} className="h-[35px] border-b-2 border-black">
                <button aria-label={label} className={`${AQUA_RAISED} flex h-[33px] w-full items-center justify-center border-3`}>
                  <svg viewBox="0 0 21 21" className="h-[21px] w-[21px]" fill="none" stroke="#000">
                    <rect x=".5" y=".5" width="20" height="20" />
                    {icon}
                  </svg>
                </button>
              </div>
            ))}
          </div>
        </div>
        <div className="border-t border-black p-[2px]">
          <button className={`${AQUA_RAISED} ${MONO} block h-[25px] w-full border-2 text-center text-[15px] leading-[21px]`}>Close</button>
        </div>
      </div>
    </section>
  )
}

/* ---------- bottom bars ---------- */

const SmallTool = ({ label, d }: { label: string; d: string }) => (
  <button aria-label={label} className="flex w-8 items-center justify-center border-r border-black">
    <span className="flex h-[27px] w-[25px] items-center justify-center border border-t-[#fffff0] border-r-[#a8a88a] border-b-[#a8a88a] border-l-[#fffff0] bg-[#ffffcc]">
      <svg viewBox="0 0 19 19" className="h-[19px] w-[19px]" fill="none" stroke="#000">
        <path d="M.5 .5h18v18H.5z" />
        <path d={d} />
      </svg>
    </span>
  </button>
)

function CommandBar() {
  return (
    <div className={`${MONO} flex h-[34px] shrink-0 border-y-2 border-black bg-[#ffffcc] text-[12px]`}>
      <SmallTool label="Absolute coordinates" d="M4 4l11 11M4 9V4h5M15 10v5h-5" />
      <SmallTool label="Polar coordinates" d="M4 15L15 4M4 15h12M5 4v5M10 15v-4M13 11l2 3" />
      <span className="flex bg-[#53cfaf]">
        <SmallTool label="Grid snap" d="M3 7l4-4h9v13H3zM9.500 3v13M3 9.500h13" />
      </span>
      <label htmlFor="xy" className="flex w-[47px] items-center pl-[2px] whitespace-nowrap">X Y :</label>
      <input
        id="xy"
        type="text"
        className="h-[30px] w-[172px] border-3 border-t-[#8c8c70] border-r-[#d8d8b0] border-b-[#d8d8b0] border-l-[#8c8c70] bg-[#ffffcc] px-[2px] outline-none placeholder:text-black"
        placeholder="⁞"
      />
      <span className="flex border-x-2 border-[#53cfaf]">
        <SmallTool label="Attention" d="M9.500 3v9M9.500 14v3M8.500 3v8M10 14v2" />
      </span>
      <p className="flex flex-1 items-center">&lt;M1&gt; - Select first area corner</p>
      <div className="relative flex border-l-2 border-black bg-[#53cfaf] p-[2px] pl-[6px]">
        <select
          aria-label="Units"
          className="h-[26px] w-[70px] appearance-none border-2 border-t-[#b4f0de] border-r-[#2f6b5e] border-b-[#2f6b5e] border-l-[#b4f0de] bg-[#53cfaf] pl-[3px] text-[15px] leading-5"
        >
          <option>Inch</option>
        </select>
        <span className="pointer-events-none absolute top-3 right-[9px] h-[7px] w-[12px] border-2 border-t-[#b4f0de] border-r-[#2f6b5e] border-b-[#2f6b5e] border-l-[#b4f0de]" />
      </div>
    </div>
  )
}

function ImeBar() {
  return (
    <div className="absolute right-[161px] bottom-0 flex h-[26px] w-[79px] items-center gap-[6px] border-t border-[#555] bg-linear-to-b from-[#7c8888] to-[#424a4a] pl-1">
      <svg viewBox="0 0 74 24" className="h-6 w-[74px]" aria-hidden="true">
        <g fill="#222">
          {grid(0, 4, 3, 5, 3, 4, 1, 2).map(([x, y]) => <rect key={`${x}-${y}`} x={x} y={y} width="2" height="2" />)}
        </g>
        <rect x="16" y="9" width="14" height="9" rx="1" fill="#d8d8d8" />
        <path d="M18 11.500h10M18 13.500h10M19 16h7M23 9q0-4 6-3" stroke="#666" fill="none" strokeDasharray="2 1" />
        <circle cx="45" cy="12" r="7.500" fill="#1018b8" stroke="#b8c0ff" />
        <text x="45" y="16" textAnchor="middle" fontFamily="Liberation Sans" fontWeight="bold" fontSize="12" fill="#fff">?</text>
        <path d="M63 7h6v2h-6zM63 16h6l-3 3z" fill="#fff" />
      </svg>
    </div>
  )
}

const appIcons: { name: string; stacked?: boolean; art: ReactNode }[] = [
  {
    name: 'Shell',
    art: (
      <>
        <path d="M16 29C6 26 0 18 1 11 3 5 9 2 16 2s13 4 15 9c1 8-5 16-15 18z" fill="#ffe3a0" stroke="#e0a040" />
        <path d="M16 28L4 8M16 28L9 4M16 28V3M16 28l7-24" stroke="#e8a850" />
        <path d="M20 9l2 7 8 1-6 5 2 8-6-5-7 5 3-8-6-5 8-1z" fill="#f07820" stroke="#b05010" />
      </>
    ),
  },
  {
    name: 'Notes',
    art: (
      <>
        <path d="M4 2h24v27H4z" fill="#dff4fc" stroke="#58b8e0" strokeWidth="2" />
        <path d="M7 7h18M7 11h18M7 15h18M7 19h18M7 23h18" stroke="#3888b8" strokeWidth="2" />
      </>
    ),
  },
  {
    name: 'DingTalk',
    art: (
      <>
        <circle cx="16" cy="16" r="16" fill="#3296fa" />
        <path d="M9 7l13 6c2 1 2 3 1 4l-2 3h2l-7 7 1-5-4-1 2-1c-3-1-5-3-5-5l5 1c-4-2-6-5-6-9z" fill="#fff" />
      </>
    ),
  },
  {
    name: 'Floppy',
    art: (
      <>
        <path d="M1 1h29v30H1z" fill="#1838d8" />
        <path d="M8 1h15v11H8z" fill="#e8e8e8" />
        <path d="M16 3h4v7h-4z" fill="#1838d8" />
        <path d="M4 15h24v15H4z" fill="#fff" />
        <path d="M6 18h20M6 22h9M6 26h9" stroke="#d02020" />
        <text x="17" y="28" fontSize="8" fontFamily="Liberation Mono" fill="#000">64</text>
      </>
    ),
  },
  {
    name: 'Genesis',
    art: <path d="M27 2l-2 7c-5-1-8 0-10 4s-3 9 0 10c3 0 5-2 6-5h-4l1-4h9c1 8-3 15-11 15C8 29 5 23 7 15 9 7 17 4 27 2z" fill="#e83020" stroke="#a81810" />,
  },
  {
    name: 'Plotter',
    art: (
      <>
        <path d="M3 14V2h22" fill="none" stroke="#10a040" />
        <path d="M12 4h9c12 0 12 17 0 17h-3v9l-9-4V12h9v4h3c3 0 3-6 0-6h-9z" fill="#129a40" />
        <path d="M5 12h6M5 15h6M5 18h6M5 21h6M5 24h6" stroke="#10a040" />
      </>
    ),
  },
  {
    name: 'Excel',
    stacked: true,
    art: (
      <>
        <path d="M2 5q0-4 4-4h16v26H2z" fill="#e4f4dc" stroke="#60a040" />
        <path d="M13 6l18 2v22l-18-1z" fill="#fff" stroke="#50903a" />
        <path d="M17 14h12v13H17zM17 20h12M23 14v13" stroke="#60a050" strokeWidth="2" fill="none" />
        <path d="M6 8l10 12M16 8L5 20" stroke="#20702a" strokeWidth="4" />
      </>
    ),
  },
  {
    name: 'Word',
    art: (
      <>
        <path d="M2 5q0-4 4-4h16v26H2z" fill="#e0ecfc" stroke="#3868b8" />
        <path d="M13 6l18 2v22l-18-1z" fill="#fff" stroke="#3868b8" />
        <path d="M18 12h11M18 16h11M18 20h11M18 24h11" stroke="#3868b8" strokeWidth="2" />
        <path d="M5 9l3 10 3-7 3 7 3-10" fill="none" stroke="#2050a0" strokeWidth="3" />
      </>
    ),
  },
  {
    name: 'Viewer',
    art: (
      <>
        <ellipse cx="19" cy="19" rx="12" ry="9" fill="#18a8a0" stroke="#105850" />
        <ellipse cx="20" cy="19" rx="8" ry="6" fill="none" stroke="#063838" strokeWidth="2" />
        <circle cx="20" cy="18" r="3" fill="#f0f030" stroke="#806000" />
        <path d="M1 5l9-4 3 6-6 4zM8 11l7 10" fill="#30d0c8" stroke="#107068" />
      </>
    ),
  },
  {
    name: 'X Server',
    stacked: true,
    art: (
      <>
        <path d="M2 2h7l20 27h-7z" fill="#800080" stroke="#fff" />
        <path d="M29 2L4 29" stroke="#fff" strokeWidth="3" />
        <path d="M29 2L4 29" stroke="#301030" strokeWidth="1.500" />
      </>
    ),
  },
]

function Taskbar() {
  return (
    <footer className="flex h-10 shrink-0 items-stretch border-t border-[#5c6c84] bg-linear-to-b from-[#243a58] to-[#1b2d49]">
      <button aria-label="Start" className="mr-[5px] flex w-[54px] items-center justify-center">
        <svg viewBox="0 0 40 38" className="h-[38px] w-10">
          <defs>
            <radialGradient id="orb" cy=".85">
              <stop offset="0" stopColor="#3fd8ff" />
              <stop offset=".6" stopColor="#1c68a8" />
              <stop offset="1" stopColor="#6f8faa" />
            </radialGradient>
          </defs>
          <ellipse cx="20" cy="19" rx="18" ry="17" fill="url(#orb)" stroke="#86a8c0" />
          <path d="M12 10q4-3 8 0l-2 8q-4-2-8 0z" fill="#f06028" />
          <path d="M21 11q4 3 9 0l-2 8q-4 2-9 0z" fill="#90c840" />
          <path d="M10 19q4-2 8 0l-2 8q-4-2-8 0z" fill="#48a8e8" />
          <path d="M19 20q4 3 9 0l-2 8q-4 2-9 0z" fill="#ffd030" />
          <path d="M4 14Q20-5 36 14 20 20 4 14z" fill="#fff" opacity=".25" />
        </svg>
      </button>
      <nav className="flex gap-1 py-px">
        {appIcons.map(({ name, stacked, art }) => (
          <span key={name} className={stacked ? 'flex w-[58px] border-r border-[#7f8c9e] pr-[3px]' : 'flex w-[58px]'}>
            <button aria-label={name} className="flex flex-1 items-center justify-center rounded-[3px] border border-[#8090a4] bg-linear-to-br from-[#8e9aaa] via-[#46566e] to-[#34465f]">
              <svg viewBox="0 0 32 32" className="h-8 w-8">{art}</svg>
            </button>
          </span>
        ))}
      </nav>
      <div className="ml-auto flex items-center">
        <svg viewBox="0 0 90 20" className="mr-[2px] h-5 w-[90px]" aria-hidden="true">
          <path d="M4 12l4-4 4 4z" fill="#fff" />
          <path d="M25 3v14" stroke="#fff" strokeWidth="2" />
          <path d="M27 4q4-2 7 1t5 0v7q-4 1-6-1t-6 0z" fill="#fff" />
          <circle cx="35" cy="13" r="5" fill="#d82818" />
          <path d="M33 11l4 4M37 11l-4 4" stroke="#fff" strokeWidth="1.500" />
          <path d="M48 7h3l4-4v13l-4-4h-3z" fill="#fff" />
          <path d="M57 7q2 3 0 5M60 5q3 5 0 9" fill="none" stroke="#fff" />
          <path d="M76 5h10v8H73M73 3v5M77 3v4M75 8v5M77 16h8" fill="none" stroke="#fff" strokeWidth="2" />
        </svg>
        <div className={`${SANS} w-20 text-center text-[12px] leading-[18px] text-white`}>
          <p>18:18</p>
          <p>2022/4/20</p>
        </div>
        <button aria-label="Show desktop" className="h-full w-[14px] border border-[#7f8fa5] bg-linear-to-b from-[#56677f] to-[#1b2d49]" />
      </div>
    </footer>
  )
}

export default function App() {
  return (
    <div className="relative flex h-screen flex-col overflow-hidden bg-black text-black">
      <TitleBar />
      <HeaderBar />
      <div className="flex min-h-0 flex-1">
        <LayerPanel />
        <main className="min-w-0 flex-1 bg-black">
          <BoardArt />
        </main>
        <ToolColumn />
      </div>
      <CommandBar />
      <div className="relative h-8 shrink-0 border-t-3 border-b-2 border-t-[#578585] border-b-[#d4f8f4] bg-[#b4ffff] px-[2px]">
        <p className={`${MONO} h-full border border-black pt-px text-center text-[12px] leading-6 shadow-[inset_2px_2px_#e0ffff,inset_-2px_-2px_#578585]`}>
          1998 r11.811 Pads were selected
        </p>
        <ImeBar />
      </div>
      <Taskbar />
      <Popview />
    </div>
  )
}
